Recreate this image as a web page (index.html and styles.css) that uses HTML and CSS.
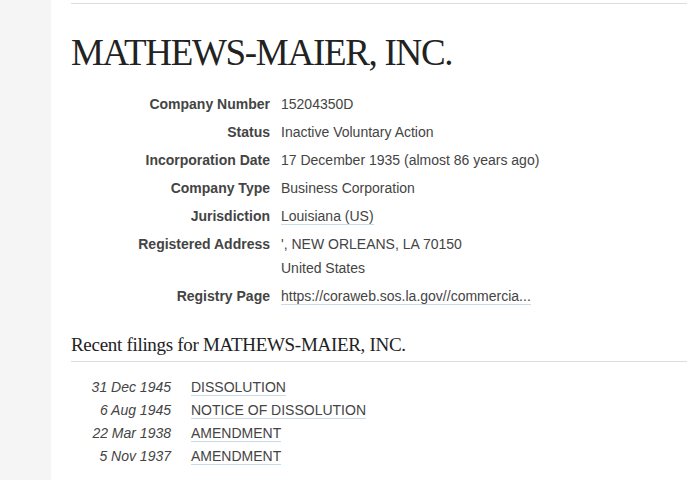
FILE: index.html
```html
<!DOCTYPE html>
<html>
<head>
<meta charset="utf-8">
<link rel="stylesheet" href="styles.css">
</head>
<body>
<div class="page">
  <aside class="sidebar"></aside>
  <main class="main">
    <div class="topline"></div>
    <h1 class="title">MATHEWS-MAIER, INC.</h1>
    <dl class="details">
      <dt>Company Number</dt><dd>15204350D</dd>
      <dt>Status</dt><dd>Inactive Voluntary Action</dd>
      <dt>Incorporation Date</dt><dd>17 December 1935 (almost 86 years ago)</dd>
      <dt>Company Type</dt><dd>Business Corporation</dd>
      <dt>Jurisdiction</dt><dd><a class="link" href="#">Louisiana (US)</a></dd>
      <dt>Registered Address</dt><dd><div class="addr">', NEW ORLEANS, LA 70150</div><div class="addr2">United States</div></dd>
      <dt>Registry Page</dt><dd><a class="link" href="#">https://coraweb.sos.la.gov//commercia...</a></dd>
    </dl>
    <h2 class="subtitle">Recent filings for MATHEWS-MAIER, INC.</h2>
    <div class="filings">
      <div class="fdate">31 Dec 1945</div><div class="ftitle"><a class="link" href="#">DISSOLUTION</a></div>
      <div class="fdate">6 Aug 1945</div><div class="ftitle"><a class="link" href="#">NOTICE OF DISSOLUTION</a></div>
      <div class="fdate">22 Mar 1938</div><div class="ftitle"><a class="link" href="#">AMENDMENT</a></div>
      <div class="fdate">5 Nov 1937</div><div class="ftitle"><a class="link" href="#">AMENDMENT</a></div>
    </div>
  </main>
</div>
</body>
</html>
```
FILE: styles.css
```css
html, body { margin: 0; padding: 0; background: #fff; }
body { font-family: "Liberation Sans", Arial, sans-serif; color: #444; font-size: 14px; }
.page { display: flex; min-height: 480px; }
.sidebar { width: 51px; flex: none; background: #f5f5f5; }
.main { flex: 1; padding-left: 20px; padding-top: 3px; }
.topline { height: 0; border-top: 1px solid #ddd; }
.title {
  font-family: "Liberation Serif", "Times New Roman", serif;
  font-weight: normal;
  font-size: 37px;
  letter-spacing: -1.3px;
  color: #222;
  margin: 27px 0 0 0;
  line-height: 44px;
}
.details {
  display: grid;
  grid-template-columns: 199px 1fr;
  column-gap: 11px;
  row-gap: 0;
  margin: 15px 0 0 0;
  line-height: 28px;
}
.details dt { text-align: right; font-weight: bold; margin: 0; }
.details dd { margin: 0; }
.addr2 { line-height: 20px; margin-bottom: 4px; }
.link { color: #444; text-decoration: none; border-bottom: 1px solid #c8dbe8; }
.subtitle {
  font-family: "Liberation Serif", "Times New Roman", serif;
  font-weight: normal;
  font-size: 19px;
  letter-spacing: -0.3px;
  color: #222;
  margin: 22px 0 0 0;
  padding-bottom: 3px;
  border-bottom: 1px solid #ddd;
  line-height: 26px;
}
.filings {
  display: grid;
  grid-template-columns: 100px 1fr;
  column-gap: 20px;
  margin-top: 14px;
  line-height: 23px;
}
.fdate { text-align: right; font-style: italic; }
```
